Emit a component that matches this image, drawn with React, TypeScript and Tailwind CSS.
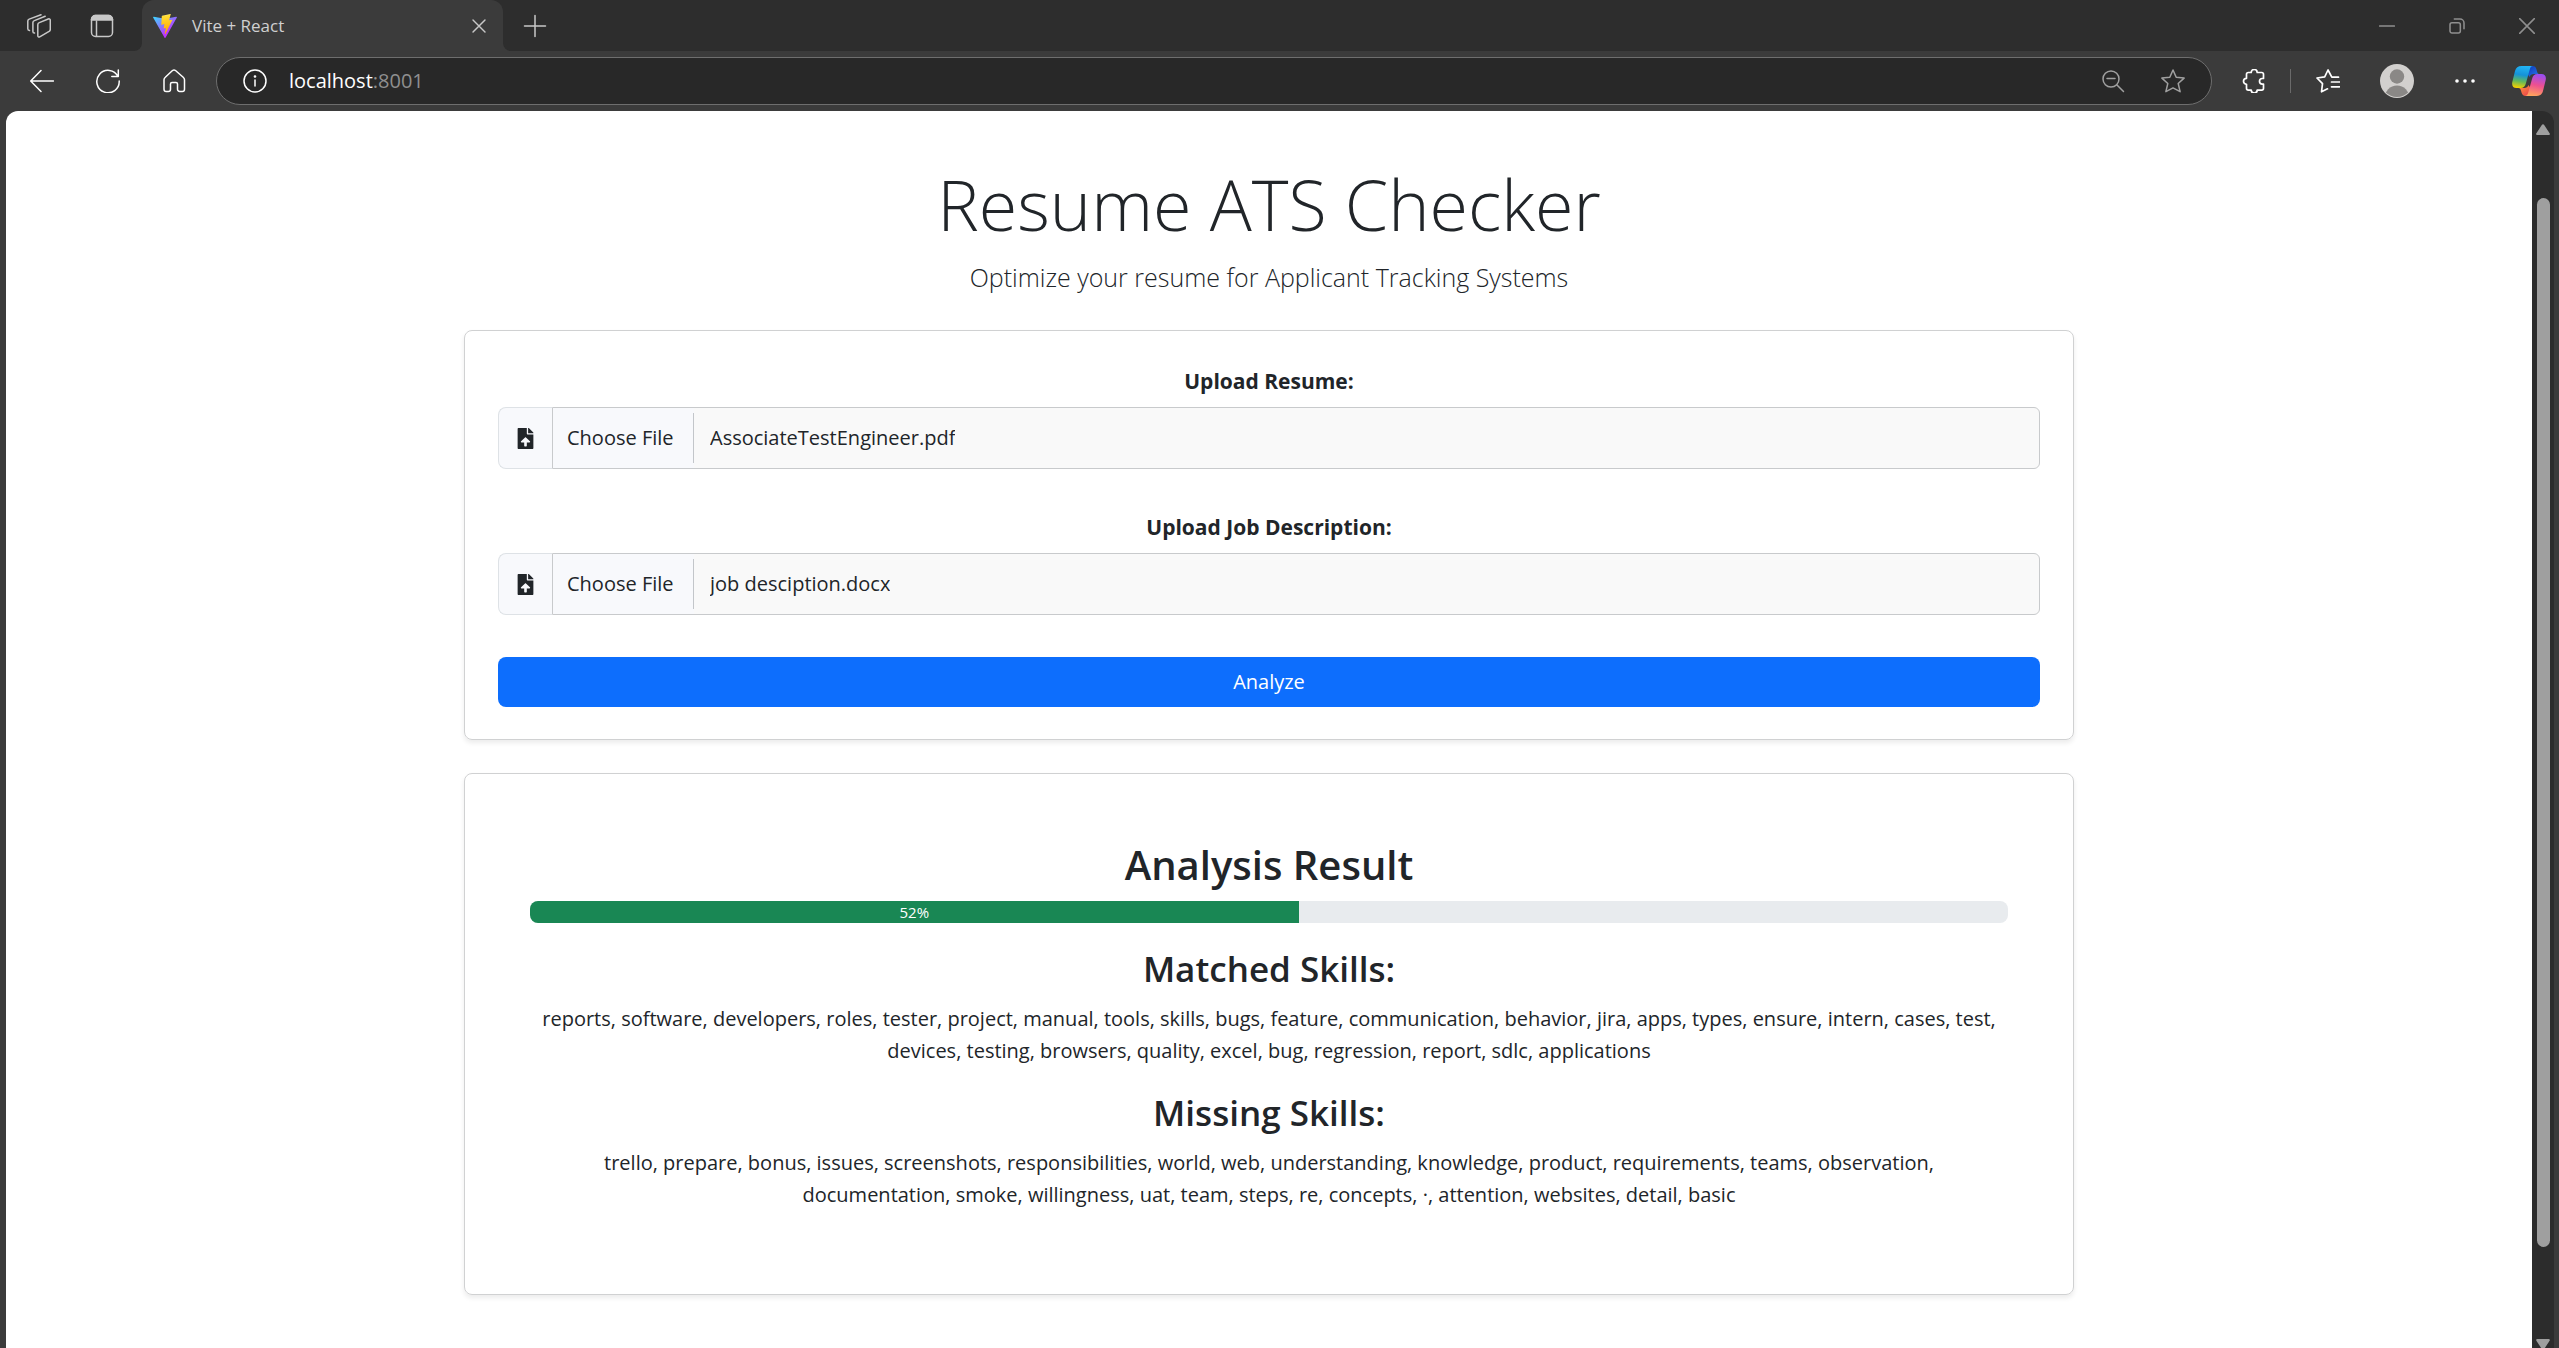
import { useId, type ReactNode } from "react";
import { FaFileUpload } from "react-icons/fa";

const matchedSkills = [
  "reports", "software", "developers", "roles", "tester", "project", "manual", "tools", "skills", "bugs",
  "feature", "communication", "behavior", "jira", "apps", "types", "ensure", "intern", "cases", "test",
  "devices", "testing", "browsers", "quality", "excel", "bug", "regression", "report", "sdlc", "applications",
];

const missingSkills = [
  "trello", "prepare", "bonus", "issues", "screenshots", "responsibilities", "world", "web", "understanding",
  "knowledge", "product", "requirements", "teams", "observation", "documentation", "smoke", "willingness",
  "uat", "team", "steps", "re", "concepts", "·", "attention", "websites", "detail", "basic",
];

function Glyph({ children, className = "size-6" }: { children: ReactNode; className?: string }) {
  return (
    <svg viewBox="0 0 24 24" fill="none" stroke="currentColor" strokeWidth="1.5" strokeLinecap="round" strokeLinejoin="round" className={className} aria-hidden="true">
      {children}
    </svg>
  );
}

function IconButton({ label, className = "", children }: { label: string; className?: string; children: ReactNode }) {
  return (
    <button type="button" aria-label={label} className={`flex shrink-0 items-center justify-center ${className}`}>
      {children}
    </button>
  );
}

function ViteLogo() {
  return (
    <svg viewBox="0 0 256 257" className="size-6 shrink-0" aria-hidden="true">
      <defs>
        <linearGradient id="viteBody" x1="-.828%" x2="57.636%" y1="7.652%" y2="78.411%">
          <stop offset="0%" stopColor="#41D1FF" />
          <stop offset="100%" stopColor="#BD34FE" />
        </linearGradient>
        <linearGradient id="viteBolt" x1="43.376%" x2="50.316%" y1="2.242%" y2="89.03%">
          <stop offset="0%" stopColor="#FFEA83" />
          <stop offset="8.333%" stopColor="#FFDD35" />
          <stop offset="100%" stopColor="#FFA800" />
        </linearGradient>
      </defs>
      <path fill="url(#viteBody)" d="M255.153 37.938L134.897 252.976c-2.483 4.44-8.862 4.466-11.382.048L.875 37.958c-2.746-4.814 1.371-10.646 6.827-9.67l120.385 21.517a6.537 6.537 0 0 0 2.322-.004l117.867-21.483c5.438-.991 9.574 4.796 6.877 9.62Z" />
      <path fill="url(#viteBolt)" d="M185.432.063L96.44 17.501a3.268 3.268 0 0 0-2.634 3.014l-5.474 92.456a3.268 3.268 0 0 0 3.997 3.378l24.777-5.718c2.318-.535 4.413 1.507 3.936 3.838l-7.361 36.047c-.495 2.426 1.782 4.5 4.151 3.78l15.304-4.649c2.372-.72 4.652 1.36 4.15 3.788l-11.698 56.621c-.732 3.542 3.979 5.473 5.943 2.437l1.313-2.028l72.516-144.72c1.215-2.423-.88-5.186-3.54-4.672l-25.505 4.922c-2.396.462-4.435-1.77-3.759-4.114l16.646-57.705c.677-2.35-1.37-4.583-3.769-4.113Z" />
    </svg>
  );
}

function CopilotLogo() {
  return (
    <svg viewBox="0 0 34 30" className="h-[30px] w-[34px]" aria-hidden="true">
      <defs>
        <linearGradient id="cpLeft" x1="0.5" y1="0" x2="0.35" y2="1">
          <stop offset="0" stopColor="#22b4f5" />
          <stop offset="0.4" stopColor="#1592d8" />
          <stop offset="0.7" stopColor="#63b95a" />
          <stop offset="1" stopColor="#f5d000" />
        </linearGradient>
        <linearGradient id="cpRight" x1="0.6" y1="0" x2="0.4" y2="1">
          <stop offset="0" stopColor="#9a4df2" />
          <stop offset="0.5" stopColor="#ee5090" />
          <stop offset="1" stopColor="#ffa45c" />
        </linearGradient>
        <linearGradient id="cpTop" x1="0" y1="0" x2="1" y2="1">
          <stop offset="0" stopColor="#0a35b8" />
          <stop offset="1" stopColor="#2a7be8" />
        </linearGradient>
        <linearGradient id="cpBottom" x1="0" y1="0" x2="1" y2="1">
          <stop offset="0" stopColor="#ff9a3c" />
          <stop offset="1" stopColor="#e8364e" />
        </linearGradient>
      </defs>
      <path fill="url(#cpTop)" d="M16 0h4.500c2.200 0 3.300 1.200 3.900 3.200l.8 2.700c.4 1.400 1 2.100 2.500 2.100h-6c-2 0-3.500 1-4.300 3L14 5z" />
      <path fill="url(#cpBottom)" d="M18 30h-4.500c-2.200 0-3.300-1.200-3.900-3.200l-.8-2.700C8.400 22.700 7.800 22 6.300 22h6c2 0 3.500-1 4.300-3L20 25z" />
      <path fill="url(#cpLeft)" d="M9.500 0H21c-1.700 0-2.600 1.200-3.100 2.900L14 17c-.9 3.300-2.300 5-5.500 5H4.600C1 22-.4 19.600.3 16L3 5C4 1.600 6 0 9.500 0z" />
      <path fill="url(#cpRight)" d="M24.500 30H13c1.700 0 2.600-1.200 3.100-2.900L20 13c.9-3.300 2.300-5 5.500-5h3.900c3.600 0 5 2.400 4.300 6L31 25c-1 3.400-3 5-6.500 5z" />
    </svg>
  );
}

function TabStrip() {
  return (
    <div className="flex h-[51px] shrink-0 items-center bg-[#2d2d2d] text-[#c8c8c8]">
      <IconButton label="Workspaces" className="ml-[9px] w-[60px]">
        <Glyph>
          <path d="M12.300 8.600 21.200 5c1.200-.5 2.100.1 2.100 1.300v9c0 .9-.4 1.500-1.200 2l-9.400 5.500c-1 .6-1.900.1-1.900-1V10.700c0-1 .5-1.700 1.500-2.100z" />
          <path d="M18.200 2.300 7.400 6.600c-1 .4-1.500 1-1.500 2v8.800c0 .9.500 1.500 1.600 1.700" />
          <path d="M14 .8 2.200 5.100c-1 .4-1.400 1-1.400 2v7.600c0 1 .5 1.700 1.700 1.900" />
        </Glyph>
      </IconButton>
      <IconButton label="Tab actions" className="w-[65px]">
        <Glyph>
          <rect x="1.500" y="1.500" width="21" height="21" rx="4" />
          <path d="M1.500 6V5.500a4 4 0 0 1 4-4h13a4 4 0 0 1 4 4V6z" fill="currentColor" />
          <path d="M6.500 7v15" />
        </Glyph>
      </IconButton>
      <div className="size-2 self-end bg-[#3b3b3b]">
        <div className="size-2 rounded-br-lg bg-[#2d2d2d]" />
      </div>
      <div className="flex h-full w-[361px] items-center rounded-t-xl bg-[#3b3b3b] pr-2 pl-[11px]">
        <ViteLogo />
        <span className="ml-[15px] flex-1 text-[17px] text-[#d0d0d0]">Vite + React</span>
        <IconButton label="Close tab" className="size-8">
          <Glyph className="size-[18px]">
            <path d="m4 4 16 16M20 4 4 20" strokeWidth="1.900" />
          </Glyph>
        </IconButton>
      </div>
      <div className="size-2 self-end bg-[#3b3b3b]">
        <div className="size-2 rounded-bl-lg bg-[#2d2d2d]" />
      </div>
      <IconButton label="New tab" className="w-[48px]">
        <Glyph>
          <path d="M12 1.500v21M1.500 12h21" />
        </Glyph>
      </IconButton>
      <div className="ml-auto flex gap-1.5 text-[#8f8f8f]">
        <IconButton label="Minimize" className="w-16">
          <Glyph className="size-4">
            <path d="M1 12h22" strokeWidth="2.500" />
          </Glyph>
        </IconButton>
        <IconButton label="Restore" className="w-16">
          <Glyph className="size-4">
            <g strokeWidth="2.300">
              <rect x="1.500" y="7" width="15.500" height="15.500" rx="3" />
              <path d="M8 1.500h8.500a6 6 0 0 1 6 6V16" />
            </g>
          </Glyph>
        </IconButton>
        <IconButton label="Close window" className="w-16">
          <Glyph className="size-4">
            <path d="m1 1 22 22M23 1 1 23" strokeWidth="2.300" />
          </Glyph>
        </IconButton>
      </div>
    </div>
  );
}

function AddressBar() {
  return (
    <div className="flex h-[60px] shrink-0 items-center bg-[#3b3b3b] pl-[9px] text-white">
      <IconButton label="Back" className="w-[66px]">
        <Glyph>
          <path d="M23.500 12H1M11 1.500.7 12 11 22.500" />
        </Glyph>
      </IconButton>
      <IconButton label="Refresh" className="w-[66px]">
        <Glyph>
          <path d="M22 7.500A11.200 11.200 0 1 0 23.200 12M22.300 1v6.500h-6.500" />
        </Glyph>
      </IconButton>
      <IconButton label="Home" className="w-[66px]">
        <Glyph>
          <path d="M10.500 1.500a2.400 2.400 0 0 1 3 0l7.700 6.700c.8.700 1.300 1.500 1.300 2.600v9.400c0 1.300-.9 2.300-2.200 2.300h-2.600c-1.300 0-2.200-1-2.200-2.300V15c0-.9-.6-1.500-1.500-1.500h-4c-.9 0-1.500.6-1.500 1.500v5.200c0 1.300-.9 2.300-2.200 2.300H4.200c-1.300 0-2.200-1-2.200-2.300v-9.400c0-1.100.5-1.900 1.300-2.600z" />
        </Glyph>
      </IconButton>

      <div className="ml-[9px] flex h-12 flex-1 items-center rounded-full border border-[#6e6e6e] bg-[#282828] pr-2 pl-3">
        <IconButton label="View site information" className="w-[52px]">
          <Glyph>
            <circle cx="12" cy="12" r="11" />
            <path d="M12 11v6" />
            <circle cx="12" cy="7.500" r=".6" fill="currentColor" />
          </Glyph>
        </IconButton>
        <div className="ml-2 flex-1 text-[20px]">
          localhost<span className="text-[#8f8f8f]">:8001</span>
        </div>
        <div className="flex text-[#a0a0a0]">
          <IconButton label="Zoom out" className="w-[60px]">
            <Glyph>
              <circle cx="10" cy="10" r="8" />
              <path d="m16 16 6.500 6.500M6 9.500h8" />
            </Glyph>
          </IconButton>
          <IconButton label="Add to favorites" className="w-[60px]">
            <Glyph>
              <path d="m12 1 3.200 7.300 7.900.8-5.900 5.400 1.900 8.200L12 18.900l-7.100 3.800 1.900-8.200L.9 9.100l7.900-.8z" />
            </Glyph>
          </IconButton>
        </div>
      </div>

      <IconButton label="Extensions" className="ml-2 w-[68px]">
        <Glyph>
          <path d="M9.200 3.500a3 3 0 0 1 6 0h4.500c1 0 1.800.8 1.800 1.800v4.200h-1.200a2.800 2.800 0 0 0 0 5.600h1.200v4.200c0 1-.8 1.800-1.800 1.800h-4.500a3 3 0 0 1-6 0H6.300c-1 0-1.800-.8-1.800-1.800v-4a3 3 0 0 1 0-6V5.300c0-1 .8-1.800 1.800-1.800z" strokeWidth="1.700" />
        </Glyph>
      </IconButton>
      <div className="mx-0.5 h-6 w-px bg-[#6a6a6a]" />
      <IconButton label="Favorites" className="w-[70px]">
        <Glyph>
          <g strokeWidth="1.700">
            <path d="M22.500 8.200h-6.700L12 1 8.700 7.800 1 9l5.500 5.600-1 8.200 6-3" />
            <path d="M15.500 13h8M15.500 17.800h8" />
          </g>
        </Glyph>
      </IconButton>
      <IconButton label="Profile" className="w-[68px]">
        <svg viewBox="0 0 34 34" className="size-[34px]" aria-hidden="true">
          <defs>
            <clipPath id="avatarClip">
              <circle cx="17" cy="17" r="16" />
            </clipPath>
          </defs>
          <circle cx="17" cy="17" r="17" fill="#d2d0ce" />
          <g clipPath="url(#avatarClip)" fill="#8a8886">
            <circle cx="17" cy="12.500" r="7.200" />
            <circle cx="17" cy="34" r="12.500" />
          </g>
        </svg>
      </IconButton>
      <IconButton label="Settings and more" className="w-[68px]">
        <Glyph>
          <g fill="currentColor" stroke="none">
            <circle cx="4" cy="12" r="1.800" />
            <circle cx="12" cy="12" r="1.800" />
            <circle cx="20" cy="12" r="1.800" />
          </g>
        </Glyph>
      </IconButton>
      <IconButton label="Copilot" className="w-[60px]">
        <CopilotLogo />
      </IconButton>
    </div>
  );
}

function FilePicker({ label, fileName }: { label: string; fileName: string }) {
  const id = useId();
  return (
    <div className="mb-[42px]">
      <label htmlFor={id} className="mb-[10px] block text-center text-[21px] font-bold">
        {label}
      </label>
      <div className="flex h-[62px] items-stretch">
        <span className="flex w-[54px] items-center justify-center rounded-l-lg border border-r-0 border-[#dee2e6] bg-[#f8f9fc]">
          <FaFileUpload className="size-[21px]" aria-hidden="true" />
        </span>
        <label className="flex min-w-0 flex-1 cursor-pointer items-center rounded-r-md border border-[#c8cacc] bg-[#f9f9f9]">
          <input id={id} type="file" className="sr-only" />
          <span className="flex h-full w-[141px] items-center bg-[#f8f9fc] py-[5px]">
            <span className="flex h-full flex-1 items-center border-r border-[#c3c6ca] pl-[14px]">Choose File</span>
          </span>
          <span className="ml-4 truncate">{fileName}</span>
        </label>
      </div>
    </div>
  );
}

function ScoreBar({ score }: { score: number }) {
  return (
    <div role="progressbar" aria-label="Match score" aria-valuenow={score} aria-valuemin={0} aria-valuemax={100} className="mt-[10px] flex h-[22px] overflow-hidden rounded-lg bg-[#e8ebee]">
      <div className="flex items-center justify-center bg-[#198754] text-[15px] text-white" style={{ width: `${score}%` }}>
        {score}%
      </div>
    </div>
  );
}

function SkillGroup({ title, skills }: { title: string; skills: string[] }) {
  return (
    <section className="mt-6">
      <h3 className="text-[35px] leading-[44px] font-semibold">{title}</h3>
      <p className="mt-3">{skills.join(", ")}</p>
    </section>
  );
}

function Scrollbar() {
  return (
    <div className="flex w-[22px] shrink-0 flex-col items-center rounded-tr-xl bg-[#2c2c2c] pt-[13px]" aria-hidden="true">
      <svg viewBox="0 0 16 12" className="h-3 w-4 shrink-0" fill="#9f9f9f">
        <path d="M6.800 1a1.400 1.400 0 0 1 2.400 0l5.400 8.200a1.100 1.100 0 0 1-.9 1.800H2.300a1.100 1.100 0 0 1-.9-1.800z" />
      </svg>
      <div className="mt-[62px] w-[13px] flex-1 rounded-full bg-[#9f9f9f]" />
      <svg viewBox="0 0 16 10" className="mt-[91px] h-[10px] w-4 shrink-0" fill="#9f9f9f">
        <path d="M6.800 11a1.400 1.400 0 0 0 2.400 0l5.400-8.200a1.100 1.100 0 0 0-.9-1.800H2.300a1.100 1.100 0 0 0-.9 1.800z" />
      </svg>
    </div>
  );
}

export default function App() {
  return (
    <div className="flex h-screen flex-col overflow-hidden bg-[#3b3b3b] font-['Open_Sans','Noto_Sans',sans-serif]">
      <TabStrip />
      <AddressBar />
      <div className="flex min-h-0 flex-1 pr-[5px] pl-[6px]">
        <main className="min-w-0 flex-1 overflow-hidden rounded-tl-xl bg-white px-8 pt-12 text-[20px] leading-8 text-[#212529]">
          <div className="mx-auto max-w-[1610px]">
            <header className="text-center font-light">
              <h1 className="text-[70px] leading-[90px]">Resume ATS Checker</h1>
              <p className="mt-2 text-[25px] leading-[40px]">Optimize your resume for Applicant Tracking Systems</p>
            </header>

            <form className="mt-[33px] rounded-lg border border-[#d0d1d2] px-[33px] pt-[34px] pb-8 shadow-[0_3px_5px_rgba(0,0,0,0.08)]">
              <FilePicker label="Upload Resume:" fileName="AssociateTestEngineer.pdf" />
              <FilePicker label="Upload Job Description:" fileName="job desciption.docx" />
              <button type="button" className="flex h-[50px] w-full items-center justify-center rounded-lg bg-[#0d6efd] text-white">
                Analyze
              </button>
            </form>

            <section className="mt-[33px] rounded-lg border border-[#d0d1d2] px-[65px] pt-[65px] pb-[83px] text-center shadow-[0_3px_5px_rgba(0,0,0,0.08)]">
              <h2 className="text-[40px] leading-[52px] font-semibold">Analysis Result</h2>
              <ScoreBar score={52} />
              <SkillGroup title="Matched Skills:" skills={matchedSkills} />
              <SkillGroup title="Missing Skills:" skills={missingSkills} />
            </section>
          </div>
        </main>
        <Scrollbar />
      </div>
    </div>
  );
}
